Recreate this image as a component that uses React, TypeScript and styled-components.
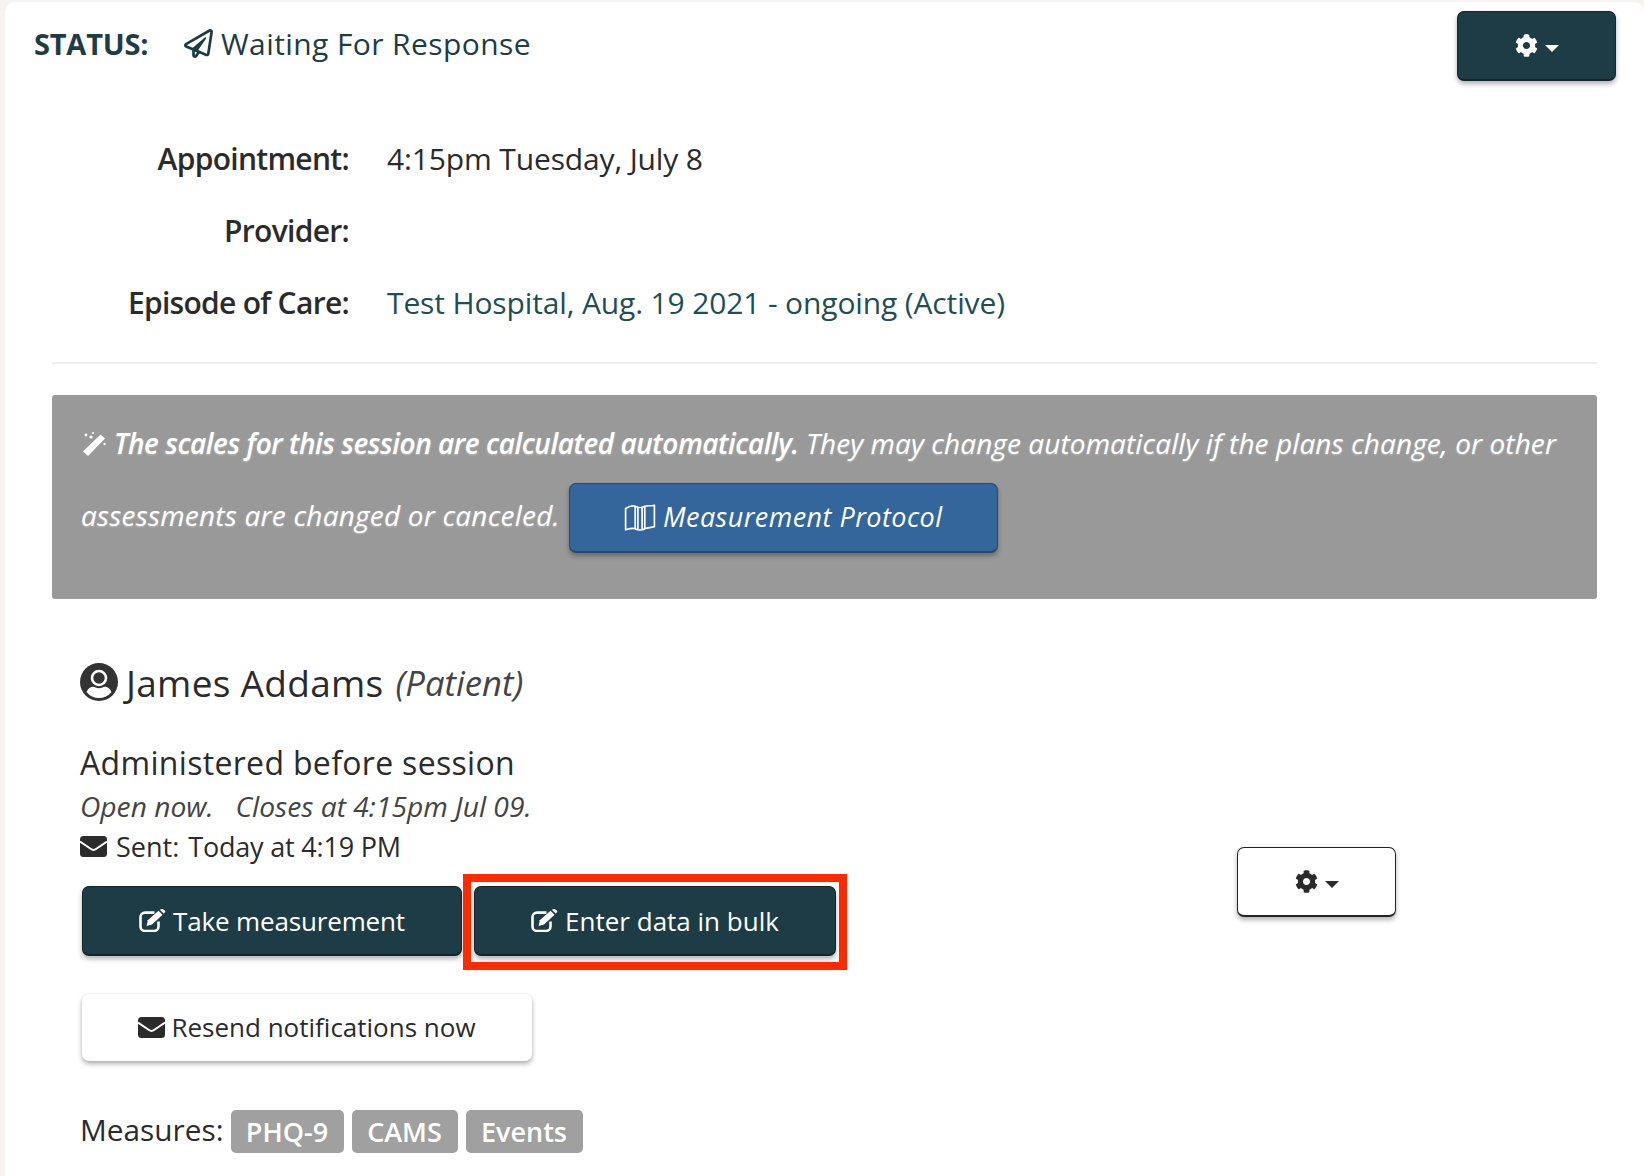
import React from "react";
import styled, { createGlobalStyle } from "styled-components";
import { FaCog, FaRegPaperPlane } from "react-icons/fa";

const Global = createGlobalStyle`
  html, body { margin: 0; padding: 0; background: #f6f4f2; }
  body { font-family: "Open Sans", "Liberation Sans", sans-serif; color: #2b2b2b; }
  * { box-sizing: border-box; }
`;

const Card = styled.main`
  margin: 2px 0 0 5px;
  height: 1174px;
  background: #fff;
  border-radius: 10px 10px 0 0;
  overflow: hidden;
`;

const Header = styled.header`
  display: flex;
  justify-content: space-between;
  align-items: flex-start;
  padding: 9px 28px 0 29px;
`;

const StatusGroup = styled.div`
  display: flex;
  align-items: center;
  height: 64px;
  color: #1c3c46;
  font-size: 30px;
`;

const StatusLabel = styled.strong`
  font-size: 29px;
  font-weight: 700;
  letter-spacing: -0.2px;
  width: 150px;
`;

const StatusValue = styled.span`
  display: inline-flex;
  align-items: center;
  gap: 8px;
  letter-spacing: 0.4px;
`;

const ActionButton = styled.button<{ $tone: "dark" | "blue" | "light" | "outline"; $width: number }>`
  display: inline-flex;
  align-items: center;
  justify-content: center;
  gap: 7px;
  width: ${(p) => p.$width}px;
  height: 70px;
  padding: 0;
  font: inherit;
  font-size: 26px;
  border-radius: 7px;
  border-style: solid;
  border-width: 1px 1px 2px;
  box-shadow: 0 3px 5px rgba(0, 0, 0, 0.3);
  color: ${(p) => (p.$tone === "dark" || p.$tone === "blue" ? "#fff" : "#2b2b2b")};
  background: ${(p) => (p.$tone === "dark" ? "#1d3c46" : p.$tone === "blue" ? "#34659b" : "#fff")};
  border-color: ${(p) =>
    p.$tone === "dark" ? "#12262c" : p.$tone === "blue" ? "#25496f" : p.$tone === "outline" ? "#222" : "#fff"};
`;

const Caret = styled.i`
  width: 0;
  height: 0;
  margin-top: 5px;
  border-left: 7.5px solid transparent;
  border-right: 7.5px solid transparent;
  border-top: 7.5px solid currentColor;
`;

const DetailGrid = styled.dl`
  display: grid;
  grid-template-columns: 344px 1fr;
  grid-auto-rows: 72px;
  column-gap: 38px;
  align-items: center;
  margin: 41px 0 0;
  font-size: 30px;
`;

const DetailLabel = styled.dt`
  text-align: right;
  font-weight: 600;
  letter-spacing: -0.7px;
`;

const DetailValue = styled.dd`
  margin: 0;
  letter-spacing: -0.14px;
`;

const EpisodeLink = styled.a`
  color: #1e4f55;
`;

const Divider = styled.hr`
  margin: 24px 47px 31px;
  border: 0;
  border-top: 2px solid #eeeeee;
`;

const Notice = styled.section`
  margin: 0 47px;
  height: 204px;
  padding: 12px 29px 0;
  background: #999;
  border-radius: 3px;
  color: #fff;
  font-size: 28px;
  font-style: italic;
  line-height: 72px;
  letter-spacing: 0.08px;
  text-shadow: 0 1px 2px rgba(255, 255, 255, 0.35);
`;

const NoticeStrong = styled.strong`
  font-weight: 600;
  letter-spacing: -0.45px;
`;

const NoticeTail = styled.span`
  letter-spacing: 0.2px;
`;

const WandIcon = styled.svg`
  width: 26px;
  height: 26px;
  margin-right: 7px;
  vertical-align: -3px;
  fill: #fff;
`;

const ProtocolButton = styled(ActionButton)`
  margin: -2px 0 0 9px;
  vertical-align: middle;
  font-size: 27px;
  font-style: italic;
  letter-spacing: 0.45px;
  text-shadow: none;
`;

const MapIcon = styled.svg`
  width: 32px;
  height: 29px;
  fill: none;
  stroke: #fff;
  stroke-width: 1.6;
  stroke-linejoin: round;
`;

const Patient = styled.section`
  padding: 58px 0 0 75px;
`;

const PatientName = styled.h2`
  display: flex;
  align-items: center;
  gap: 8px;
  margin: 0;
  height: 50px;
  font-size: 37px;
  font-weight: 400;
  letter-spacing: 0.3px;
`;

const PatientIcon = styled.svg`
  width: 38px;
  height: 38px;
  flex: none;
`;

const PatientRole = styled.em`
  font-size: 34.7px;
  margin-left: 4px;
  color: #444;
  letter-spacing: 0;
`;

const AssessmentRow = styled.div`
  display: flex;
  margin-top: 31px;
`;

const AssessmentBody = styled.div`
  width: 1157px;
`;

const AssessmentSide = styled.div`
  padding-top: 109px;
`;

const AssessmentTitle = styled.h3`
  margin: 0;
  height: 49px;
  line-height: 49px;
  font-size: 32px;
  font-weight: 400;
  letter-spacing: 0.32px;
`;

const OpenLine = styled.div`
  height: 39px;
  line-height: 39px;
  font-size: 28.2px;
  font-style: italic;
  color: #444;
  white-space: pre;
`;

const SentLine = styled.div`
  display: flex;
  align-items: center;
  height: 40px;
  gap: 9px;
  font-size: 27px;
`;

const SentTime = styled.span`
  letter-spacing: -0.2px;
`;

const EnvelopeIcon = styled.svg`
  width: 27px;
  height: 21px;
  flex: none;
`;

const EditIcon = styled.svg`
  width: 27px;
  height: 23px;
  flex: none;
  fill: none;
  stroke: currentColor;
`;

const TakeLabel = styled.span`
  letter-spacing: -0.15px;
`;

const ButtonRow = styled.div`
  display: flex;
  align-items: flex-start;
  margin: 20px 0 0 2px;
`;

const HighlightFrame = styled.div`
  margin: -12px 0 0 1px;
  padding: 4px 3px 6px;
  border: 8px solid #ff2a00;
`;

const ResendButton = styled(ActionButton)`
  display: flex;
  height: 67px;
  margin: 24px 0 0 2px;
  gap: 6px;
  box-shadow: 0 3px 5px rgba(0, 0, 0, 0.3), 0 0 3px rgba(0, 0, 0, 0.08);
`;

const MeasureRow = styled.div`
  display: flex;
  align-items: center;
  gap: 9px;
  margin-top: 45px;
  font-size: 29.8px;
`;

const BadgeList = styled.div`
  display: flex;
  gap: 8px;
  margin: 4px 0 0 -2px;
`;

const Badge = styled.span<{ $width: number }>`
  display: flex;
  align-items: center;
  justify-content: center;
  width: ${(p) => p.$width}px;
  height: 43px;
  background: #a0a0a0;
  border-radius: 5px;
  color: #fff;
  font-size: 27px;
  font-weight: 600;
`;

const Wand = () => (
  <WandIcon viewBox="0 0 24 26" aria-hidden="true">
    <path d="M18.5 3.5 L23 7.5 L6 25 L1 20.5 Z" />
    <circle cx="4" cy="4" r="1.4" />
    <circle cx="9" cy="6" r="1.6" />
    <circle cx="11" cy="2" r="1" />
    <circle cx="22.5" cy="13" r="1.2" />
  </WandIcon>
);

const MapGlyph = () => (
  <MapIcon viewBox="0 0 30 27" aria-hidden="true">
    <path d="M1.5 5 C5 3 8 2 10.5 3 C13 4.5 17 4.5 19.5 3 C22 2 25 3 28.5 2 V22 C25 23 22 23 19.5 24 C17 25.5 13 25.5 10.5 24 C8 23 5 24 1.5 25 Z" />
    <path d="M10.5 3 V24 M13 4.4 V25 M17 4.4 V25 M19.5 3 V24" />
  </MapIcon>
);

const PatientGlyph = () => (
  <PatientIcon viewBox="0 0 38 38" aria-hidden="true">
    <circle cx="19" cy="19" r="19" fill="#333" />
    <path d="M6.5 29 C9 23.5 13 23 15.5 24.5 C18 25.5 20 25.5 22.5 24.5 C25 23 29 23.5 31.5 29 A16 16 0 0 1 6.5 29 Z" fill="#fff" />
    <circle cx="19" cy="15" r="7" fill="#333" stroke="#fff" strokeWidth="2.6" />
  </PatientIcon>
);

const Envelope = () => (
  <EnvelopeIcon viewBox="0 0 27 21" aria-hidden="true">
    <rect x="0" y="0" width="27" height="21" rx="3.5" fill="#2b2b2b" />
    <path d="M0 5.5 L11 13 Q13.5 14.8 16 13 L27 5.5" fill="none" stroke="#fff" strokeWidth="2" />
  </EnvelopeIcon>
);

const Edit = () => (
  <EditIcon viewBox="0 0 27 23" aria-hidden="true">
    <path
      d="M15.5 3.6 H6 a4.5 4.5 0 0 0 -4.5 4.5 V17.5 a4.5 4.5 0 0 0 4.5 4.5 H15 a4.5 4.5 0 0 0 4.5 -4.5 V12.5"
      strokeWidth="2.6"
    />
    <path d="M7.6 17 L8.8 11.2 L19.5 1.8 L23.6 5.8 L13 15.6 Z" fill="currentColor" stroke="none" />
    <path d="M20.8 0.8 L24.8 4.6 L26 3.2 Q26.6 2.4 25.8 1.6 L23.8 0 Q23 -0.4 22.2 0.2 Z" fill="currentColor" stroke="none" />
  </EditIcon>
);

export default function App() {
  return (
    <>
      <Global />
      <Card>
        <Header>
          <StatusGroup>
            <StatusLabel>STATUS:</StatusLabel>
            <StatusValue>
              <FaRegPaperPlane size={29} />
              Waiting For Response
            </StatusValue>
          </StatusGroup>
          <ActionButton $tone="dark" $width={159}>
            <FaCog size={23} />
            <Caret />
          </ActionButton>
        </Header>

        <DetailGrid>
          <DetailLabel>Appointment:</DetailLabel>
          <DetailValue>4:15pm Tuesday, July 8</DetailValue>
          <DetailLabel>Provider:</DetailLabel>
          <DetailValue />
          <DetailLabel>Episode of Care:</DetailLabel>
          <DetailValue>
            <EpisodeLink>Test Hospital, Aug. 19 2021 - ongoing (Active)</EpisodeLink>
          </DetailValue>
        </DetailGrid>

        <Divider />

        <Notice>
          <Wand />
          <NoticeStrong>The scales for this session are calculated automatically.</NoticeStrong> They may change
          automatically if the plans change, or other <NoticeTail>assessments are changed or canceled.</NoticeTail>
          <ProtocolButton $tone="blue" $width={429}>
            <MapGlyph />
            Measurement Protocol
          </ProtocolButton>
        </Notice>

        <Patient>
          <PatientName>
            <PatientGlyph />
            James Addams
            <PatientRole>(Patient)</PatientRole>
          </PatientName>

          <AssessmentRow>
            <AssessmentBody>
              <AssessmentTitle>Administered before session</AssessmentTitle>
              <OpenLine>Open now.   Closes at 4:15pm Jul 09.</OpenLine>
              <SentLine>
                <Envelope />
                <span>Sent:</span>
                <SentTime>Today at 4:19 PM</SentTime>
              </SentLine>
              <ButtonRow>
                <ActionButton $tone="dark" $width={380}>
                  <Edit />
                  <TakeLabel>Take measurement</TakeLabel>
                </ActionButton>
                <HighlightFrame>
                  <ActionButton $tone="dark" $width={362}>
                    <Edit />
                    Enter data in bulk
                  </ActionButton>
                </HighlightFrame>
              </ButtonRow>
              <ResendButton $tone="light" $width={450}>
                <Envelope />
                Resend notifications now
              </ResendButton>
              <MeasureRow>
                Measures:
                <BadgeList>
                  <Badge $width={113}>PHQ-9</Badge>
                  <Badge $width={106}>CAMS</Badge>
                  <Badge $width={117}>Events</Badge>
                </BadgeList>
              </MeasureRow>
            </AssessmentBody>
            <AssessmentSide>
              <ActionButton $tone="outline" $width={159}>
                <FaCog size={23} />
                <Caret />
              </ActionButton>
            </AssessmentSide>
          </AssessmentRow>
        </Patient>
      </Card>
    </>
  );
}
